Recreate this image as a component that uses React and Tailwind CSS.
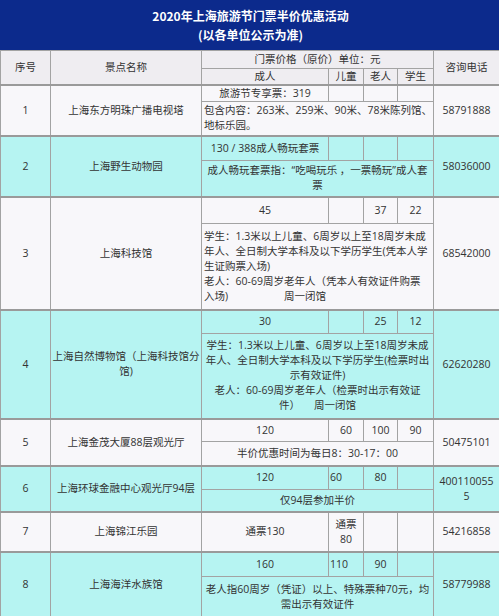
import React from "react";

const bd = "border border-[#a3a3a3]";
const td = `${bd} p-0 text-center align-middle font-normal`;
const first = "border-t-2 border-t-[#9a9a9a]";

function Row({ bg, cells }) {
  return null;
}

export default function App() {
  const white = "bg-[#f8f7fa]";
  const cyan = "bg-[#b6f4f2]";
  return (
    <div className="w-[499px] h-[616px] overflow-hidden bg-white font-['Open_Sans','Noto_Sans_CJK_SC',sans-serif] text-[#333] text-[10.5px] leading-[15px]">
      <div className="h-[50px] bg-[#0c2a8c] flex flex-col items-center justify-center text-white font-bold text-[12px] leading-[19px] font-['Noto_Sans_CJK_SC',sans-serif]">
        <div className="pl-[2px]">2020年上海旅游节门票半价优惠活动</div>
        <div className="pl-[2px]">(以各单位公示为准)</div>
      </div>
      <table className="w-[499px] table-fixed border-collapse">
        <colgroup>
          <col className="w-[50px]" />
          <col className="w-[151px]" />
          <col className="w-[127px]" />
          <col className="w-[35px]" />
          <col className="w-[34px]" />
          <col className="w-[36px]" />
          <col className="w-[66px]" />
        </colgroup>
        <thead className="bg-[#efedf1]">
          <tr className="h-[18px]">
            <th rowSpan={2} className={td}>序号</th>
            <th rowSpan={2} className={td}>景点名称</th>
            <th colSpan={4} className={td}>门票价格（原价）单位：元</th>
            <th rowSpan={2} className={td}>咨询电话</th>
          </tr>
          <tr className="h-[16px]">
            <th className={td}>成人</th>
            <th className={td}>儿童</th>
            <th className={td}>老人</th>
            <th className={td}>学生</th>
          </tr>
        </thead>
        <tbody>
          {/* 1 */}
          <tr className={`h-[16px] ${white}`}>
            <td rowSpan={2} className={`${td} ${first}`}>1</td>
            <td rowSpan={2} className={`${td} ${first}`}>上海东方明珠广播电视塔</td>
            <td className={`${td} ${first}`}>旅游节专享票：319</td>
            <td className={`${td} ${first}`}></td>
            <td className={`${td} ${first}`}></td>
            <td className={`${td} ${first}`}></td>
            <td rowSpan={2} className={`${td} ${first}`}>58791888</td>
          </tr>
          <tr className={`h-[34px] ${white}`}>
            <td colSpan={4} className={`${td} text-left pl-[2px] whitespace-nowrap`}>
              包含内容：263米、259米、90米、78米陈列馆、<br />地标乐园。
            </td>
          </tr>
          {/* 2 */}
          <tr className={`h-[25px] ${cyan}`}>
            <td rowSpan={2} className={`${td} ${first}`}>2</td>
            <td rowSpan={2} className={`${td} ${first}`}>上海野生动物园</td>
            <td className={`${td} ${first}`}>130 / 388成人畅玩套票</td>
            <td className={`${td} ${first}`}></td>
            <td className={`${td} ${first}`}></td>
            <td className={`${td} ${first}`}></td>
            <td rowSpan={2} className={`${td} ${first}`}>58036000</td>
          </tr>
          <tr className={`h-[36px] ${cyan}`}>
            <td colSpan={4} className={`${td} whitespace-nowrap`}>
              成人畅玩套票指：“吃喝玩乐 ，一票畅玩”成人套<br />票
            </td>
          </tr>
          {/* 3 */}
          <tr className={`h-[27px] ${white}`}>
            <td rowSpan={2} className={`${td} ${first}`}>3</td>
            <td rowSpan={2} className={`${td} ${first}`}>上海科技馆</td>
            <td className={`${td} ${first}`}>45</td>
            <td className={`${td} ${first}`}></td>
            <td className={`${td} ${first}`}>37</td>
            <td className={`${td} ${first}`}>22</td>
            <td rowSpan={2} className={`${td} ${first}`}>68542000</td>
          </tr>
          <tr className={`h-[86px] ${white}`}>
            <td colSpan={4} className={`${td} text-left pl-[2px] whitespace-nowrap`}>
              学生：1.3米以上儿童、6周岁以上至18周岁未成<br />
              年人、全日制大学本科及以下学历学生(凭本人学<br />
              生证购票入场)<br />
              老人：60-69周岁老年人（凭本人有效证件购票<br />
              入场)<span className="inline-block w-[56px]"></span>周一闭馆
            </td>
          </tr>
          {/* 4 */}
          <tr className={`h-[24px] ${cyan}`}>
            <td rowSpan={2} className={`${td} ${first}`}>4</td>
            <td rowSpan={2} className={`${td} ${first} whitespace-nowrap`}>
              上海自然博物馆（上海科技馆分<br />馆)
            </td>
            <td className={`${td} ${first}`}>30</td>
            <td className={`${td} ${first}`}></td>
            <td className={`${td} ${first}`}>25</td>
            <td className={`${td} ${first}`}>12</td>
            <td rowSpan={2} className={`${td} ${first}`}>62620280</td>
          </tr>
          <tr className={`h-[85px] ${cyan}`}>
            <td colSpan={4} className={`${td} whitespace-nowrap`}>
              学生：1.3米以上儿童、6周岁以上至18周岁未成<br />
              年人、全日制大学本科及以下学历学生(检票时出<br />
              示有效证件)<br />
              老人：60-69周岁老年人（检票时出示有效证<br />
              件）<span className="inline-block w-[14px]"></span>周一闭馆
            </td>
          </tr>
          {/* 5 */}
          <tr className={`h-[23px] ${white}`}>
            <td rowSpan={2} className={`${td} ${first}`}>5</td>
            <td rowSpan={2} className={`${td} ${first}`}>上海金茂大厦88层观光厅</td>
            <td className={`${td} ${first}`}>120</td>
            <td className={`${td} ${first}`}>60</td>
            <td className={`${td} ${first}`}>100</td>
            <td className={`${td} ${first}`}>90</td>
            <td rowSpan={2} className={`${td} ${first}`}>50475101</td>
          </tr>
          <tr className={`h-[24px] ${white}`}>
            <td colSpan={4} className={`${td} whitespace-nowrap`}>
              半价优惠时间为每日8：30-17：00
            </td>
          </tr>
          {/* 6 */}
          <tr className={`h-[24px] ${cyan}`}>
            <td rowSpan={2} className={`${td} ${first}`}>6</td>
            <td rowSpan={2} className={`${td} ${first}`}>上海环球金融中心观光厅94层</td>
            <td className={`${td} ${first}`}>120</td>
            <td className={`${td} ${first} text-left pl-[1px]`}>60</td>
            <td className={`${td} ${first}`}>80</td>
            <td className={`${td} ${first}`}></td>
            <td rowSpan={2} className={`${td} ${first}`}>
              400110055<br />5
            </td>
          </tr>
          <tr className={`h-[22px] ${cyan}`}>
            <td colSpan={4} className={`${td}`}>仅94层参加半价</td>
          </tr>
          {/* 7 */}
          <tr className={`h-[40px] ${white}`}>
            <td className={`${td} ${first}`}>7</td>
            <td className={`${td} ${first}`}>上海锦江乐园</td>
            <td className={`${td} ${first}`}>通票130</td>
            <td className={`${td} ${first}`}>
              通票<br />80
            </td>
            <td className={`${td} ${first}`}></td>
            <td className={`${td} ${first}`}></td>
            <td className={`${td} ${first}`}>54216858</td>
          </tr>
          {/* 8 */}
          <tr className={`h-[25px] ${cyan}`}>
            <td rowSpan={2} className={`${td} ${first}`}>8</td>
            <td rowSpan={2} className={`${td} ${first}`}>上海海洋水族馆</td>
            <td className={`${td} ${first}`}>160</td>
            <td className={`${td} ${first} text-left pl-[1px]`}>110</td>
            <td className={`${td} ${first}`}>90</td>
            <td className={`${td} ${first}`}></td>
            <td rowSpan={2} className={`${td} ${first}`}>58779988</td>
          </tr>
          <tr className={`h-[41px] ${cyan}`}>
            <td colSpan={4} className={`${td} whitespace-nowrap`}>
              老人指60周岁（凭证）以上、特殊票种70元，均<br />
              需出示有效证件
            </td>
          </tr>
        </tbody>
      </table>
    </div>
  );
}
